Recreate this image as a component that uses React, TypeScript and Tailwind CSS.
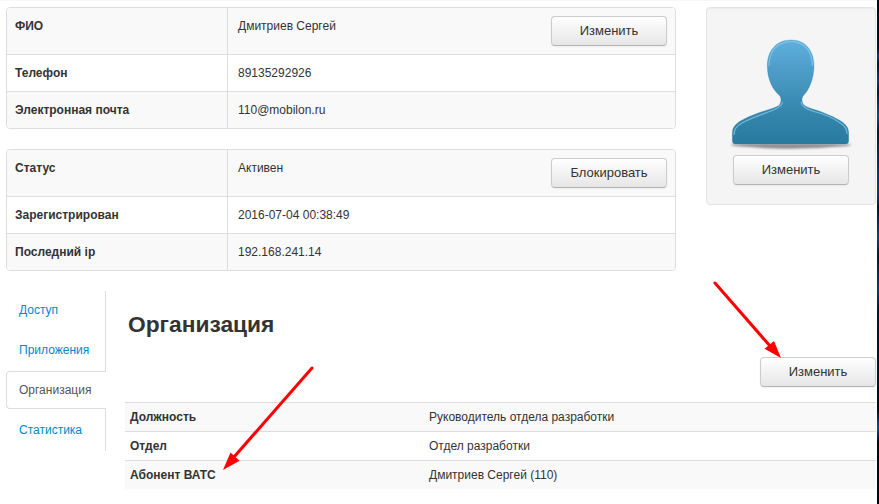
import React from "react";

function Button({ children }: { children: React.ReactNode }) {
  return (
    <button className="block h-[30px] w-[116px] shrink-0 rounded border border-[#ccc] border-b-[#b3b3b3] bg-linear-to-b from-white to-[#e6e6e6] text-center text-[13px] leading-[20px] pb-px text-[#333] shadow-[inset_0_1px_0_rgba(255,255,255,0.2),0_1px_2px_rgba(0,0,0,0.05)]">
      {children}
    </button>
  );
}

function InfoTable({ rows, action }: { rows: [string, string][]; action: string }) {
  return (
    <div className="h-[122px] w-[670px] overflow-hidden rounded border border-[#ddd]">
      {rows.map(([label, value], i) => (
        <div
          key={label}
          className={`flex ${i === 0 ? "h-[46px]" : "h-[37px] border-t border-[#ddd]"} ${i % 2 === 0 ? "bg-[#f9f9f9]" : "bg-white"}`}
        >
          <div className="w-[220px] p-2 font-bold">{label}</div>
          <div className="flex flex-1 justify-between border-l border-[#ddd] p-2 pl-[10px]">
            <span>{value}</span>
            {i === 0 && <Button>{action}</Button>}
          </div>
        </div>
      ))}
    </div>
  );
}

function Avatar() {
  const body =
    "M60 3C75 3 83 14 83 29C83 42 78 53 72.500 58.500C70.500 61 70.500 65 73 68C77 71.500 86 72.500 98 78C109 83 117.700 87 117.700 96V104Q117.700 107 114.700 107H4.300Q1.300 107 1.300 104V96C1.300 87 10 83 22 78C34 73 43 71.500 48 68.500C50.500 65 50.500 61 48.500 58.500C42 53 36.300 43 36.300 29C36.300 14 45 3 60 3Z";
  return (
    <svg className="block h-[118px] w-[126px]" viewBox="-3 0 126 118">
      <defs>
        <linearGradient id="body" x1="0" y1="0" x2="0" y2="1">
          <stop offset="0" stopColor="#5fafdf" />
          <stop offset="0.25" stopColor="#509fcb" />
          <stop offset="0.7" stopColor="#3486ad" />
          <stop offset="1" stopColor="#287a9f" />
        </linearGradient>
        <filter id="soft" x="-10%" y="-100%" width="120%" height="300%">
          <feGaussianBlur stdDeviation="1.2" />
        </filter>
      </defs>
      <path
        d="M0 107.500C20 106 100 106 120 107.500C122 109 112 109.500 95 110.500C75 112 45 112 25 110.500C8 109.500 -2 109 0 107.500Z"
        fill="#807c80"
        opacity="0.85"
        filter="url(#soft)"
      />
      <path d={body} fill="url(#body)" />
      <path
        d="M38 29C38 14.500 46 4.700 60 4.700C74 4.700 81.300 14.500 81.300 29M51.500 65C51 69 47 71.500 40 74C31 77.500 20 81 11 86C5 89.500 3 92 3 98M70.200 65C70.500 70 76 72.500 83 74.500C93 77 104 82 110 86.500C114 89 116 92 116 97"
        fill="none"
        stroke="#8ccbe9"
        strokeWidth="1.2"
        opacity="0.75"
      />
      <path d={body} fill="none" stroke="#287ea7" strokeWidth="0.500" opacity="0.500" />
    </svg>
  );
}

const tabs = ["Доступ", "Приложения", "Организация", "Статистика"];

function Tabs() {
  return (
    <nav className="flex w-[100px] flex-col">
      {tabs.map((tab) =>
        tab === "Организация" ? (
          <div key={tab} className="h-10">
            <div className="flex h-[38px] items-center rounded-l border border-r-0 border-[#ddd] pl-3 text-[#555]">{tab}</div>
            <div className="h-[2px] border-r border-[#ddd]" />
          </div>
        ) : (
          <div key={tab} className="h-10 border-r border-[#ddd] py-[9px] pl-[13px] text-[#0088cc]">
            {tab}
          </div>
        ),
      )}
    </nav>
  );
}

const details = [
  ["Должность", "Руководитель отдела разработки"],
  ["Отдел", "Отдел разработки"],
  ["Абонент ВАТС", "Дмитриев Сергей (110)"],
];

export default function App() {
  return (
    <div className="relative flex h-[504px] w-[879px] overflow-hidden bg-white font-['Liberation_Sans',Arial,sans-serif] text-[12px] leading-[20px] text-[#333]">
      <main className="w-[877px] shrink-0 border-t border-[#f8f8f8] pt-[6px] pl-[6px]">
        <div className="flex gap-[30px]">
          <div className="flex flex-col gap-5">
            <InfoTable
              action="Изменить"
              rows={[
                ["ФИО", "Дмитриев Сергей"],
                ["Телефон", "89135292926"],
                ["Электронная почта", "110@mobilon.ru"],
              ]}
            />
            <InfoTable
              action="Блокировать"
              rows={[
                ["Статус", "Активен"],
                ["Зарегистрирован", "2016-07-04 00:38:49"],
                ["Последний ip", "192.168.241.14"],
              ]}
            />
          </div>
          <div className="flex h-[198px] w-[170px] flex-col items-center rounded border border-[#e3e3e3] bg-[#f5f5f5] pt-[29px] shadow-[inset_0_1px_1px_rgba(0,0,0,0.05)]">
            <Avatar />
            <Button>Изменить</Button>
          </div>
        </div>
        <div className="mt-5 flex gap-[19px]">
          <Tabs />
          <section className="w-[751px]">
            <h3 className="mt-[13px] pl-[3px] text-[22.750px] leading-[40px] font-bold">Организация</h3>
            <div className="mt-[13px] flex justify-end">
              <Button>Изменить</Button>
            </div>
            <div className="mt-[15px]">
              {details.map(([label, value], i) => (
                <div
                  key={label}
                  className={`flex border-t border-[#ddd] px-[5px] py-1 ${i % 2 === 0 ? "bg-[#f9f9f9]" : "bg-white"}`}
                >
                  <div className="w-[299px] font-bold">{label}</div>
                  <div>{value}</div>
                </div>
              ))}
            </div>
          </section>
        </div>
      </main>
      <aside className="w-[2px] bg-[linear-gradient(#020814_0px,#03101f_48px,#15386a_56px,#04162a_64px,#15386a_81px,#05182c_92px,#1c4680_116px,#05182c_132px,#123463_174px,#15386a_192px,#05182c_208px,#173f74_238px,#05182c_256px,#143867_290px,#05182c_310px,#04121f_380px,#020a14_410px,#1a4a8c_427px,#020a14_442px,#020610_504px)]" />
      <svg className="pointer-events-none absolute inset-0" width="879" height="504" viewBox="0 0 879 504">
        <g stroke="#f00" strokeWidth="3" strokeLinecap="round" fill="#f00">
          <path d="M312 368L234 457" />
          <path d="M715 283L770 346" />
          <path stroke="none" d="M223 470L230.500 452.500L239.500 460.700Z" />
          <path stroke="none" d="M781 358L764.500 348.700L774 341Z" />
        </g>
      </svg>
    </div>
  );
}
